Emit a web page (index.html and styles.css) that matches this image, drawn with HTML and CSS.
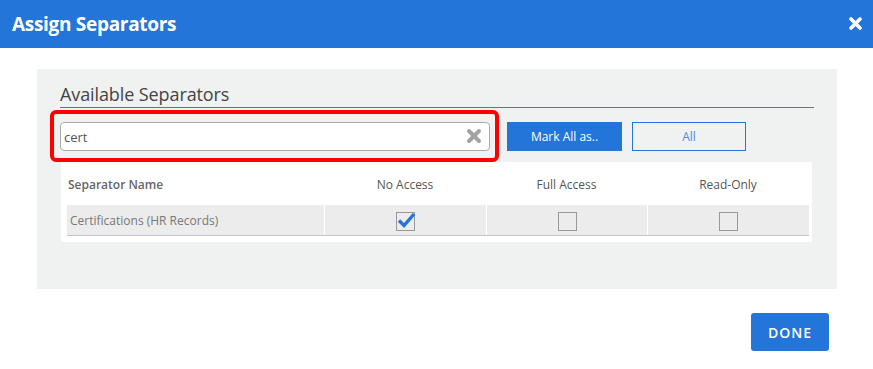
FILE: index.html
```html
<!DOCTYPE html>
<html lang="en">
<head>
  <meta charset="UTF-8">
  <title>Assign Separators</title>
  <link rel="stylesheet" href="styles.css">
</head>
<body>

  <header class="modal-header">
    <h1>Assign Separators</h1>
    <button class="close-btn" aria-label="Close">
      <svg width="13" height="13" viewBox="0 0 13 13"><path d="M2 2 L11 11 M11 2 L2 11" stroke="#fff" stroke-width="3.6" stroke-linecap="round"/></svg>
    </button>
  </header>

  <main class="modal-body">
    <section class="panel">
      <h2>Available Separators</h2>

      <div class="toolbar">
        <div class="search">
          <input type="text" value="cert">
          <svg class="clear" width="16" height="16" viewBox="0 0 16 16"><path d="M3 3 L13 13 M13 3 L3 13" stroke="#a3a3a3" stroke-width="4" stroke-linecap="round"/></svg>
          <div class="highlight"></div>
        </div>
        <button class="btn-primary">Mark All as..</button>
        <button class="btn-outline">All</button>
      </div>

      <div class="table">
        <div class="row head">
          <div class="cell name">Separator Name</div>
          <div class="cell">No Access</div>
          <div class="cell">Full Access</div>
          <div class="cell">Read-Only</div>
        </div>
        <div class="row data">
          <div class="cell name">Certifications (HR Records)</div>
          <div class="cell">
            <span class="checkbox checked">
              <svg width="22" height="20" viewBox="0 0 22 20"><path d="M4 10.5 L9 15.5 L19 4" fill="none" stroke="#2474db" stroke-width="3.4"/></svg>
            </span>
          </div>
          <div class="cell"><span class="checkbox"></span></div>
          <div class="cell"><span class="checkbox"></span></div>
        </div>
      </div>
    </section>
  </main>

  <footer class="modal-footer">
    <button class="done-btn">DONE</button>
  </footer>

</body>
</html>
```

FILE: styles.css
```css
* {
  margin: 0;
  padding: 0;
  box-sizing: border-box;
}

body {
  font-family: 'Open Sans', sans-serif;
  background: #fff;
  width: 873px;
  height: 369px;
  overflow: hidden;
}

button {
  font-family: inherit;
  cursor: pointer;
}

.modal-header {
  height: 48px;
  background-color: #2475d9;
  display: flex;
  align-items: center;
  justify-content: space-between;
  padding: 0 11px 0 12px;
}

.modal-header h1 {
  color: #fff;
  font-size: 19px;
  font-weight: 700;
  letter-spacing: -0.3px;
  line-height: 24px;
  margin-top: -1px;
}

.close-btn {
  background: none;
  border: none;
  display: flex;
  margin-top: -2px;
}

.modal-body {
  padding: 21px 36px 0 37px;
}

.panel {
  background-color: #f0f1f1;
  padding: 13px 23px 47px 23px;
}

.panel h2 {
  font-size: 18px;
  font-weight: 400;
  color: #444;
  line-height: 24px;
  padding-bottom: 1px;
  letter-spacing: -0.1px;
  border-bottom: 1px solid #6b7378;
}

.toolbar {
  display: flex;
  align-items: center;
  margin-top: 14px;
}

.search {
  position: relative;
  width: 430px;
  height: 29px;
}

.search input {
  width: 100%;
  height: 100%;
  border: 1px solid #aaa;
  border-radius: 4px;
  padding: 0 30px 0 3px;
  font-family: inherit;
  font-size: 13px;
  color: #555;
  background: #fff;
  outline: none;
}

.search .clear {
  position: absolute;
  right: 8px;
  top: 6px;
}

.highlight {
  position: absolute;
  left: -10px;
  right: -9px;
  top: -12px;
  bottom: -11px;
  border: 4px solid #ff0000;
  border-radius: 6px;
  pointer-events: none;
}

.btn-primary {
  margin-left: 17px;
  width: 115px;
  height: 29px;
  background-color: #2475d9;
  border: none;
  color: #fff;
  font-size: 12px;
  font-weight: 400;
}

.btn-outline {
  margin-left: 10px;
  width: 114px;
  height: 29px;
  background: transparent;
  border: 1px solid #2475d9;
  color: #4a8de0;
  font-size: 12px;
  font-weight: 400;
}

.table {
  background: #fff;
  margin: 11px 2px 0 1px;
  padding: 0 3px 6px 6px;
}

.row {
  display: grid;
  grid-template-columns: 257px 162px 161px 162px;
}

.cell {
  display: flex;
  align-items: center;
  justify-content: center;
  font-size: 12px;
  color: #555;
}

.cell.name {
  justify-content: flex-start;
}

.head {
  height: 43px;
}

.head .cell {
  padding-top: 1px;
}

.head .cell.name {
  font-weight: 600;
  color: #666;
  padding-left: 1px;
}

.data {
  height: 31px;
  background: #ececec;
  border-bottom: 1px solid #c2c6cc;
}

.data .cell + .cell {
  border-left: 1px solid #fff;
}

.data .cell.name {
  padding-left: 3px;
  color: #777;
}

.checkbox {
  position: relative;
  width: 19px;
  height: 19px;
  border: 1px solid #999;
  background: #ececec;
  margin-top: 2px;
}

.checkbox svg {
  position: absolute;
  left: -2px;
  top: -3px;
}

.modal-footer {
  display: flex;
  justify-content: flex-end;
  padding: 24px 44px 0 0;
}

.done-btn {
  width: 78px;
  height: 38px;
  background-color: #2475d9;
  border: none;
  border-radius: 3px;
  color: #fff;
  font-size: 14px;
  font-weight: 600;
  letter-spacing: 1px;
}
```
